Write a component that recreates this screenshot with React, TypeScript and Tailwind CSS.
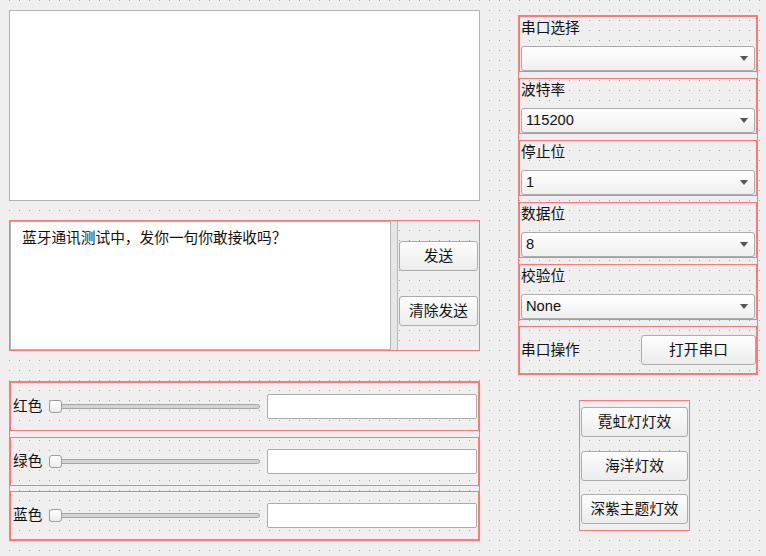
import React from "react";

const FONT = "font-['Liberation_Sans','Noto_Sans_CJK_SC',sans-serif]";

function Btn({ label, className = "" }: { label: string; className?: string }) {
  return (
    <div
      className={`flex items-center justify-center h-[30px] rounded-[3px] border border-[#ababab] bg-[linear-gradient(to_bottom,#fdfdfd,#ececec)] text-[14.7px] text-[#111] ${className}`}
    >
      {label}
    </div>
  );
}

function Combo({ value }: { value: string }) {
  return (
    <div className="flex items-center justify-between h-[25px] rounded-[3px] border border-[#ababab] bg-[linear-gradient(to_bottom,#ffffff,#efefef)] pl-[4px] pr-[6px] text-[14.7px] text-[#111]">
      <span>{value}</span>
      <svg width="8" height="5" viewBox="0 0 8 5">
        <path d="M0 0 H8 L4 5 Z" fill="#555" />
      </svg>
    </div>
  );
}

function ComboGroup({ label, value }: { label: string; value: string }) {
  return (
    <div className="h-[56px] border border-[#f77] px-[1px] flex flex-col">
      <div className="h-[23px] leading-[23px] text-[14.7px] text-[#111]">{label}</div>
      <div className="mt-[6px]">
        <Combo value={value} />
      </div>
    </div>
  );
}

function ColorRow({ label }: { label: string }) {
  return (
    <div className="h-[49px] border border-[#f77] flex items-center pl-[2px] pr-[1px]">
      <span className="text-[14.7px] text-[#111] w-[36px]">{label}</span>
      <div className="relative w-[211px] h-[13px] flex items-center">
        <div className="w-full h-[5px] rounded-[3px] border border-[#a5a5a5] bg-[#d4d4d4]" />
        <div className="absolute left-0 top-0 w-[13px] h-[13px] rounded-[3px] border border-[#9d9d9d] bg-[linear-gradient(to_bottom,#ffffff,#ececec)]" />
      </div>
      <div className="ml-[7px] flex-1 h-[25px] rounded-[2px] border border-[#ababab] bg-white" />
    </div>
  );
}

export default function App() {
  return (
    <div
      className={`${FONT} w-[766px] h-[556px] overflow-hidden bg-[#efefef] bg-[image:conic-gradient(from_270deg_at_1px_1px,#a2a2a2_90deg,transparent_0)] bg-[size:10px_10px] bg-[position:9px_0px] flex`}
    >
      {/* left column */}
      <div className="ml-[9px] w-[471px] pt-[10px] flex flex-col">
        <div className="h-[191px] w-[471px] border border-[#b3b3b3] bg-white" />

        <div className="mt-[19px] h-[131px] w-[471px] border border-[#f77] flex">
          <div className="w-[381px] h-full border border-[#b3b3b3] bg-white pl-[11px] pt-[5px] text-[14.7px] leading-[22px] text-[#111]">
            蓝牙通讯测试中，发你一句你敢接收吗？
          </div>
          <div className="w-[7px] h-full bg-[#e6e6e6] border-r border-[#f99]" />
          <div className="flex-1 flex flex-col pl-[1px] pr-[1px] pt-[20px]">
            <Btn label="发送" />
            <Btn label="清除发送" className="mt-[25px]" />
          </div>
        </div>

        <div className="mt-[30px] h-[160px] w-[471px] border border-[#f77] flex flex-col justify-between">
          <ColorRow label="红色" />
          <ColorRow label="绿色" />
          <ColorRow label="蓝色" />
        </div>
      </div>

      {/* right column */}
      <div className="ml-[38px] flex flex-col">
        <div className="mt-[15px] w-[240px] h-[360px] border border-[#f77] flex flex-col gap-[6px]">
          <ComboGroup label="串口选择" value="" />
          <ComboGroup label="波特率" value="115200" />
          <ComboGroup label="停止位" value="1" />
          <ComboGroup label="数据位" value="8" />
          <ComboGroup label="校验位" value="None" />
          <div className="flex-1 border border-[#f77] flex items-center justify-between pl-[1px]">
            <span className="text-[14.7px] text-[#111]">串口操作</span>
            <Btn label="打开串口" className="w-[115px]" />
          </div>
        </div>

        <div className="mt-[25px] ml-[61px] w-[111px] h-[131px] border border-[#f77] px-[1px] pt-[6px] flex flex-col">
          <Btn label="霓虹灯灯效" />
          <Btn label="海洋灯效" className="mt-[14px]" />
          <Btn label="深紫主题灯效" className="mt-[13px]" />
        </div>
      </div>
    </div>
  );
}
